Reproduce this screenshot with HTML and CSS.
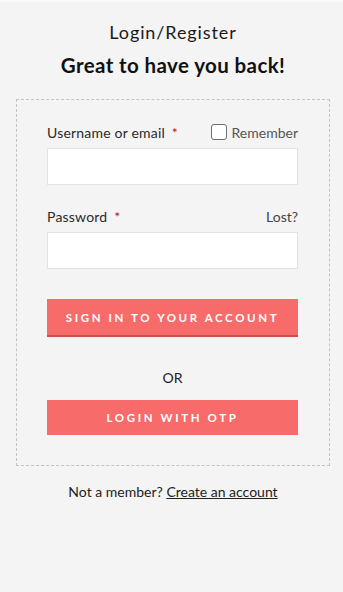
FILE: index.html
```html
<!DOCTYPE html>
<html lang="en">
<head>
<meta charset="utf-8">
<title>Login/Register</title>
<link rel="stylesheet" href="styles.css">
</head>
<body>
<div class="page">
  <h1 class="heading">Login/Register</h1>
  <h2 class="subheading">Great to have you back!</h2>
  <form class="login-box">
    <div class="label-row">
      <label class="field-label">Username or email <span class="req">*</span></label>
      <label class="remember"><span class="checkbox"></span>Remember</label>
    </div>
    <div class="input"></div>
    <div class="label-row second">
      <label class="field-label">Password <span class="req">*</span></label>
      <span class="lost">Lost?</span>
    </div>
    <div class="input"></div>
    <div class="btn btn-primary">SIGN IN TO YOUR ACCOUNT</div>
    <div class="or">OR</div>
    <div class="btn btn-otp">LOGIN WITH OTP</div>
  </form>
  <p class="footer">Not a member? <span class="link">Create an account</span></p>
</div>
</body>
</html>
```
FILE: styles.css
```css
* { box-sizing: border-box; }
html, body { margin: 0; padding: 0; }
body {
  background: #f4f4f4;
  font-family: Lato, "Open Sans", sans-serif;
  color: #222;
  border-top: 2px solid #fafafa;
}
.page {
  padding: 18px 13px 0 16px;
  display: flex;
  flex-direction: column;
}
.heading {
  margin: 0;
  text-align: center;
  font-size: 18px;
  line-height: 24px;
  letter-spacing: 0.9px;
  font-weight: 400;
  color: #1a1a1a;
}
.subheading {
  margin: 8px 0 0;
  text-align: center;
  font-size: 20.5px;
  line-height: 26px;
  letter-spacing: 0.4px;
  font-weight: 700;
  color: #111;
}
.login-box {
  margin: 21px 0 0;
  border: 1px dashed #c4c4c4;
  padding: 22px 31px 30px 30px;
  display: flex;
  flex-direction: column;
}
.label-row {
  display: flex;
  justify-content: space-between;
  align-items: center;
  height: 20px;
}
.label-row.second { margin-top: 21px; }
.field-label {
  font-size: 14px;
  letter-spacing: 0.2px;
  color: #2a2a2a;
}
.req { color: #a5222e; margin-left: 3px; }
.remember {
  display: flex;
  align-items: center;
  gap: 5px;
  font-size: 14px;
  color: #555;
}
.checkbox {
  width: 16px;
  height: 16px;
  border: 1px solid #6e6e6e;
  border-radius: 3px;
  background: #fff;
}
.lost { font-size: 14px; color: #444; }
.input {
  margin-top: 6px;
  height: 37px;
  background: #fff;
  border: 1px solid #e3e3e3;
}
.btn {
  display: flex;
  align-items: center;
  justify-content: center;
  background: #f76b6a;
  color: #fff;
  font-weight: 700;
  font-size: 11.5px;
  letter-spacing: 2.6px;
}
.btn-primary {
  margin-top: 30px;
  height: 38px;
  border-bottom: 2px solid #c9504d;
}
.or {
  margin-top: 31px;
  text-align: center;
  font-size: 14px;
  line-height: 20px;
  color: #222;
}
.btn-otp {
  margin-top: 12px;
  height: 35px;
}
.footer {
  margin: 16px 0 0;
  text-align: center;
  font-size: 14px;
  line-height: 20px;
  color: #222;
}
.link { text-decoration: underline; }
```
